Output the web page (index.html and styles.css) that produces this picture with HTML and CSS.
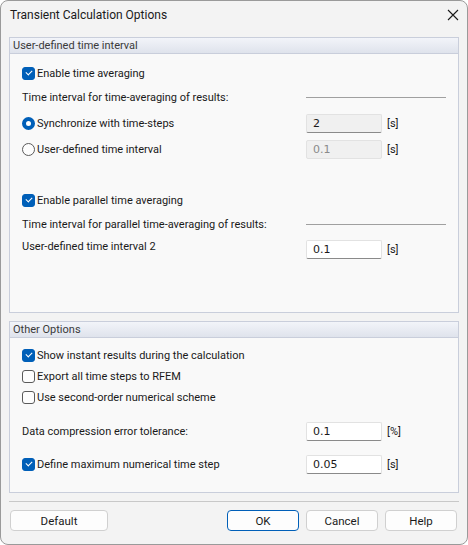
FILE: index.html
```html
<!DOCTYPE html>
<html lang="en">
<head>
    <meta charset="UTF-8">
    <title>Transient Calculation Options</title>
    <link rel="stylesheet" href="styles.css">
</head>
<body>
    <div class="dialog">
        <div class="titlebar">
            <span class="title">Transient Calculation Options</span>
            <svg class="close" width="12" height="12" viewBox="0 0 12 12">
                <path d="M1 1 L11 11 M11 1 L1 11" stroke="#1a1a1a" stroke-width="1.1" fill="none"/>
            </svg>
        </div>
        <div class="content">
            <div class="group group-time">
                <div class="group-header">User-defined time interval</div>
                <div class="group-body">
                    <div class="row row-check first">
                        <span class="check checked"></span>
                        <span class="label">Enable time averaging</span>
                    </div>
                    <div class="row row-caption">
                        <span class="label">Time interval for time-averaging of results:</span>
                        <span class="rule"></span>
                    </div>
                    <div class="row row-field row-radio1">
                        <span class="radio checked"></span>
                        <span class="label">Synchronize with time-steps</span>
                        <div class="field">
                            <span class="input gray">2</span>
                            <span class="unit">[s]</span>
                        </div>
                    </div>
                    <div class="row row-field row-radio2">
                        <span class="radio"></span>
                        <span class="label">User-defined time interval</span>
                        <div class="field">
                            <span class="input disabled">0.1</span>
                            <span class="unit">[s]</span>
                        </div>
                    </div>
                    <div class="row row-check row-parallel">
                        <span class="check checked"></span>
                        <span class="label">Enable parallel time averaging</span>
                    </div>
                    <div class="row row-caption">
                        <span class="label">Time interval for parallel time-averaging of results:</span>
                        <span class="rule"></span>
                    </div>
                    <div class="row row-field row-top">
                        <span class="label">User-defined time interval 2</span>
                        <div class="field">
                            <span class="input">0.1</span>
                            <span class="unit">[s]</span>
                        </div>
                    </div>
                </div>
            </div>

            <div class="group group-other">
                <div class="group-header">Other Options</div>
                <div class="group-body">
                    <div class="row row-check first">
                        <span class="check checked"></span>
                        <span class="label">Show instant results during the calculation</span>
                    </div>
                    <div class="row row-check">
                        <span class="check"></span>
                        <span class="label">Export all time steps to RFEM</span>
                    </div>
                    <div class="row row-check">
                        <span class="check"></span>
                        <span class="label">Use second-order numerical scheme</span>
                    </div>
                    <div class="row row-field row-tolerance">
                        <span class="label">Data compression error tolerance:</span>
                        <div class="field">
                            <span class="input">0.1</span>
                            <span class="unit">[%]</span>
                        </div>
                    </div>
                    <div class="row row-field row-maxstep">
                        <span class="check checked"></span>
                        <span class="label">Define maximum numerical time step</span>
                        <div class="field">
                            <span class="input">0.05</span>
                            <span class="unit">[s]</span>
                        </div>
                    </div>
                </div>
            </div>

            <div class="separator"></div>

            <div class="buttons">
                <button class="btn btn-wide">Default</button>
                <span class="spacer"></span>
                <button class="btn default">OK</button>
                <button class="btn">Cancel</button>
                <button class="btn">Help</button>
            </div>
        </div>
    </div>
</body>
</html>
```

FILE: styles.css
```css
html, body {
    margin: 0;
    padding: 0;
}
body {
    font-family: Roboto, "Noto Sans", sans-serif;
    font-size: 11px;
    color: #1a1a1a;
    background: #ffffff;
}
.dialog {
    width: 468px;
    height: 545px;
    box-sizing: border-box;
    border: 1px solid #9a9a9a;
    border-radius: 8px;
    background: #f3f3f3;
    overflow: hidden;
}
.titlebar {
    height: 27px;
    display: flex;
    align-items: center;
    padding: 0 9px 0 9px;
}
.title {
    flex: 1;
    font-size: 12px;
    color: #1a1a1a;
}
.close {
    margin-right: -1px;
}
.content {
    padding: 9px 8px 0 8px;
}
.group {
    border: 1px solid #c9cedb;
    background: #f9f9f9;
}
.group-header {
    height: 15px;
    line-height: 15px;
    padding-left: 3px;
    color: #3a3a3a;
    background: linear-gradient(#f2f4f9, #dfe3ec);
    border-bottom: 1px solid #c9cedb;
}
.group-time {
    height: 274px;
}
.group-other {
    height: 170px;
    margin-top: 8px;
}
.group-body {
    padding: 0 12px 0 12px;
}
.row {
    display: flex;
    align-items: center;
}
.row .label {
    flex: 1;
    white-space: nowrap;
}
.row-check {
    height: 16px;
    margin-top: 5px;
}
.row-check.first {
    margin-top: 11px;
}
.group-other .row-check.first {
    margin-top: 9px;
}
.row-caption {
    height: 16px;
    margin-top: 8px;
}
.rule {
    width: 140px;
    height: 1px;
    background: #a0a0a0;
}
.row-field {
    height: 20px;
}
.row-radio1 {
    margin-top: 8px;
}
.row-radio2 {
    margin-top: 6px;
}
.row-parallel {
    margin-top: 33px;
}
.row-top {
    margin-top: 8px;
    align-items: flex-start;
}
.row-top .label {
    line-height: 14px;
}
.row-tolerance {
    margin-top: 16px;
}
.row-maxstep {
    margin-top: 13px;
}
.field {
    width: 140px;
    display: flex;
    align-items: center;
}
.input {
    width: 76px;
    height: 19px;
    box-sizing: border-box;
    line-height: 17px;
    padding-left: 6px;
    background: #ffffff;
    border: 1px solid #e2e2e2;
    border-bottom-color: #8a8a8a;
    border-radius: 2px;
    font-family: "DejaVu Sans", sans-serif;
    font-size: 11px;
}
.input.gray {
    background: #f0f0f0;
}
.input.disabled {
    background: #f0f0f0;
    border-bottom-color: #e2e2e2;
    color: #8a8a8a;
}
.unit {
    margin-left: 5px;
}
.check, .radio {
    width: 13px;
    height: 13px;
    box-sizing: border-box;
    margin-right: 2px;
    flex: none;
    position: relative;
}
.check {
    border: 1px solid #5a5a5a;
    border-radius: 3px;
    background: #fdfdfd;
}
.check.checked {
    border-color: #005fb8;
    background: #005fb8;
}
.check.checked::after {
    content: "";
    position: absolute;
    left: 3px;
    top: 2px;
    width: 5px;
    height: 3px;
    border-left: 1px solid #ffffff;
    border-bottom: 1px solid #ffffff;
    transform: rotate(-45deg);
}
.radio {
    border: 1px solid #5a5a5a;
    border-radius: 50%;
    background: #fdfdfd;
}
.radio.checked {
    border: 4px solid #005fb8;
    background: #ffffff;
}
.separator {
    height: 1px;
    background: #c8c8c8;
    margin-top: 8px;
}
.buttons {
    display: flex;
    margin-top: 8px;
    padding-left: 1px;
}
.spacer {
    flex: 1;
}
.btn {
    width: 72px;
    height: 21px;
    margin-left: 7px;
    padding: 0;
    font-family: inherit;
    font-size: 11.5px;
    color: #1a1a1a;
    background: #fdfdfd;
    border: 1px solid #d0d0d0;
    border-radius: 4px;
}
.btn-wide {
    width: 98px;
    margin-left: 0;
}
.btn.default {
    border-color: #005fb8;
}
.buttons .btn:last-child {
    margin-right: 2px;
}
```
